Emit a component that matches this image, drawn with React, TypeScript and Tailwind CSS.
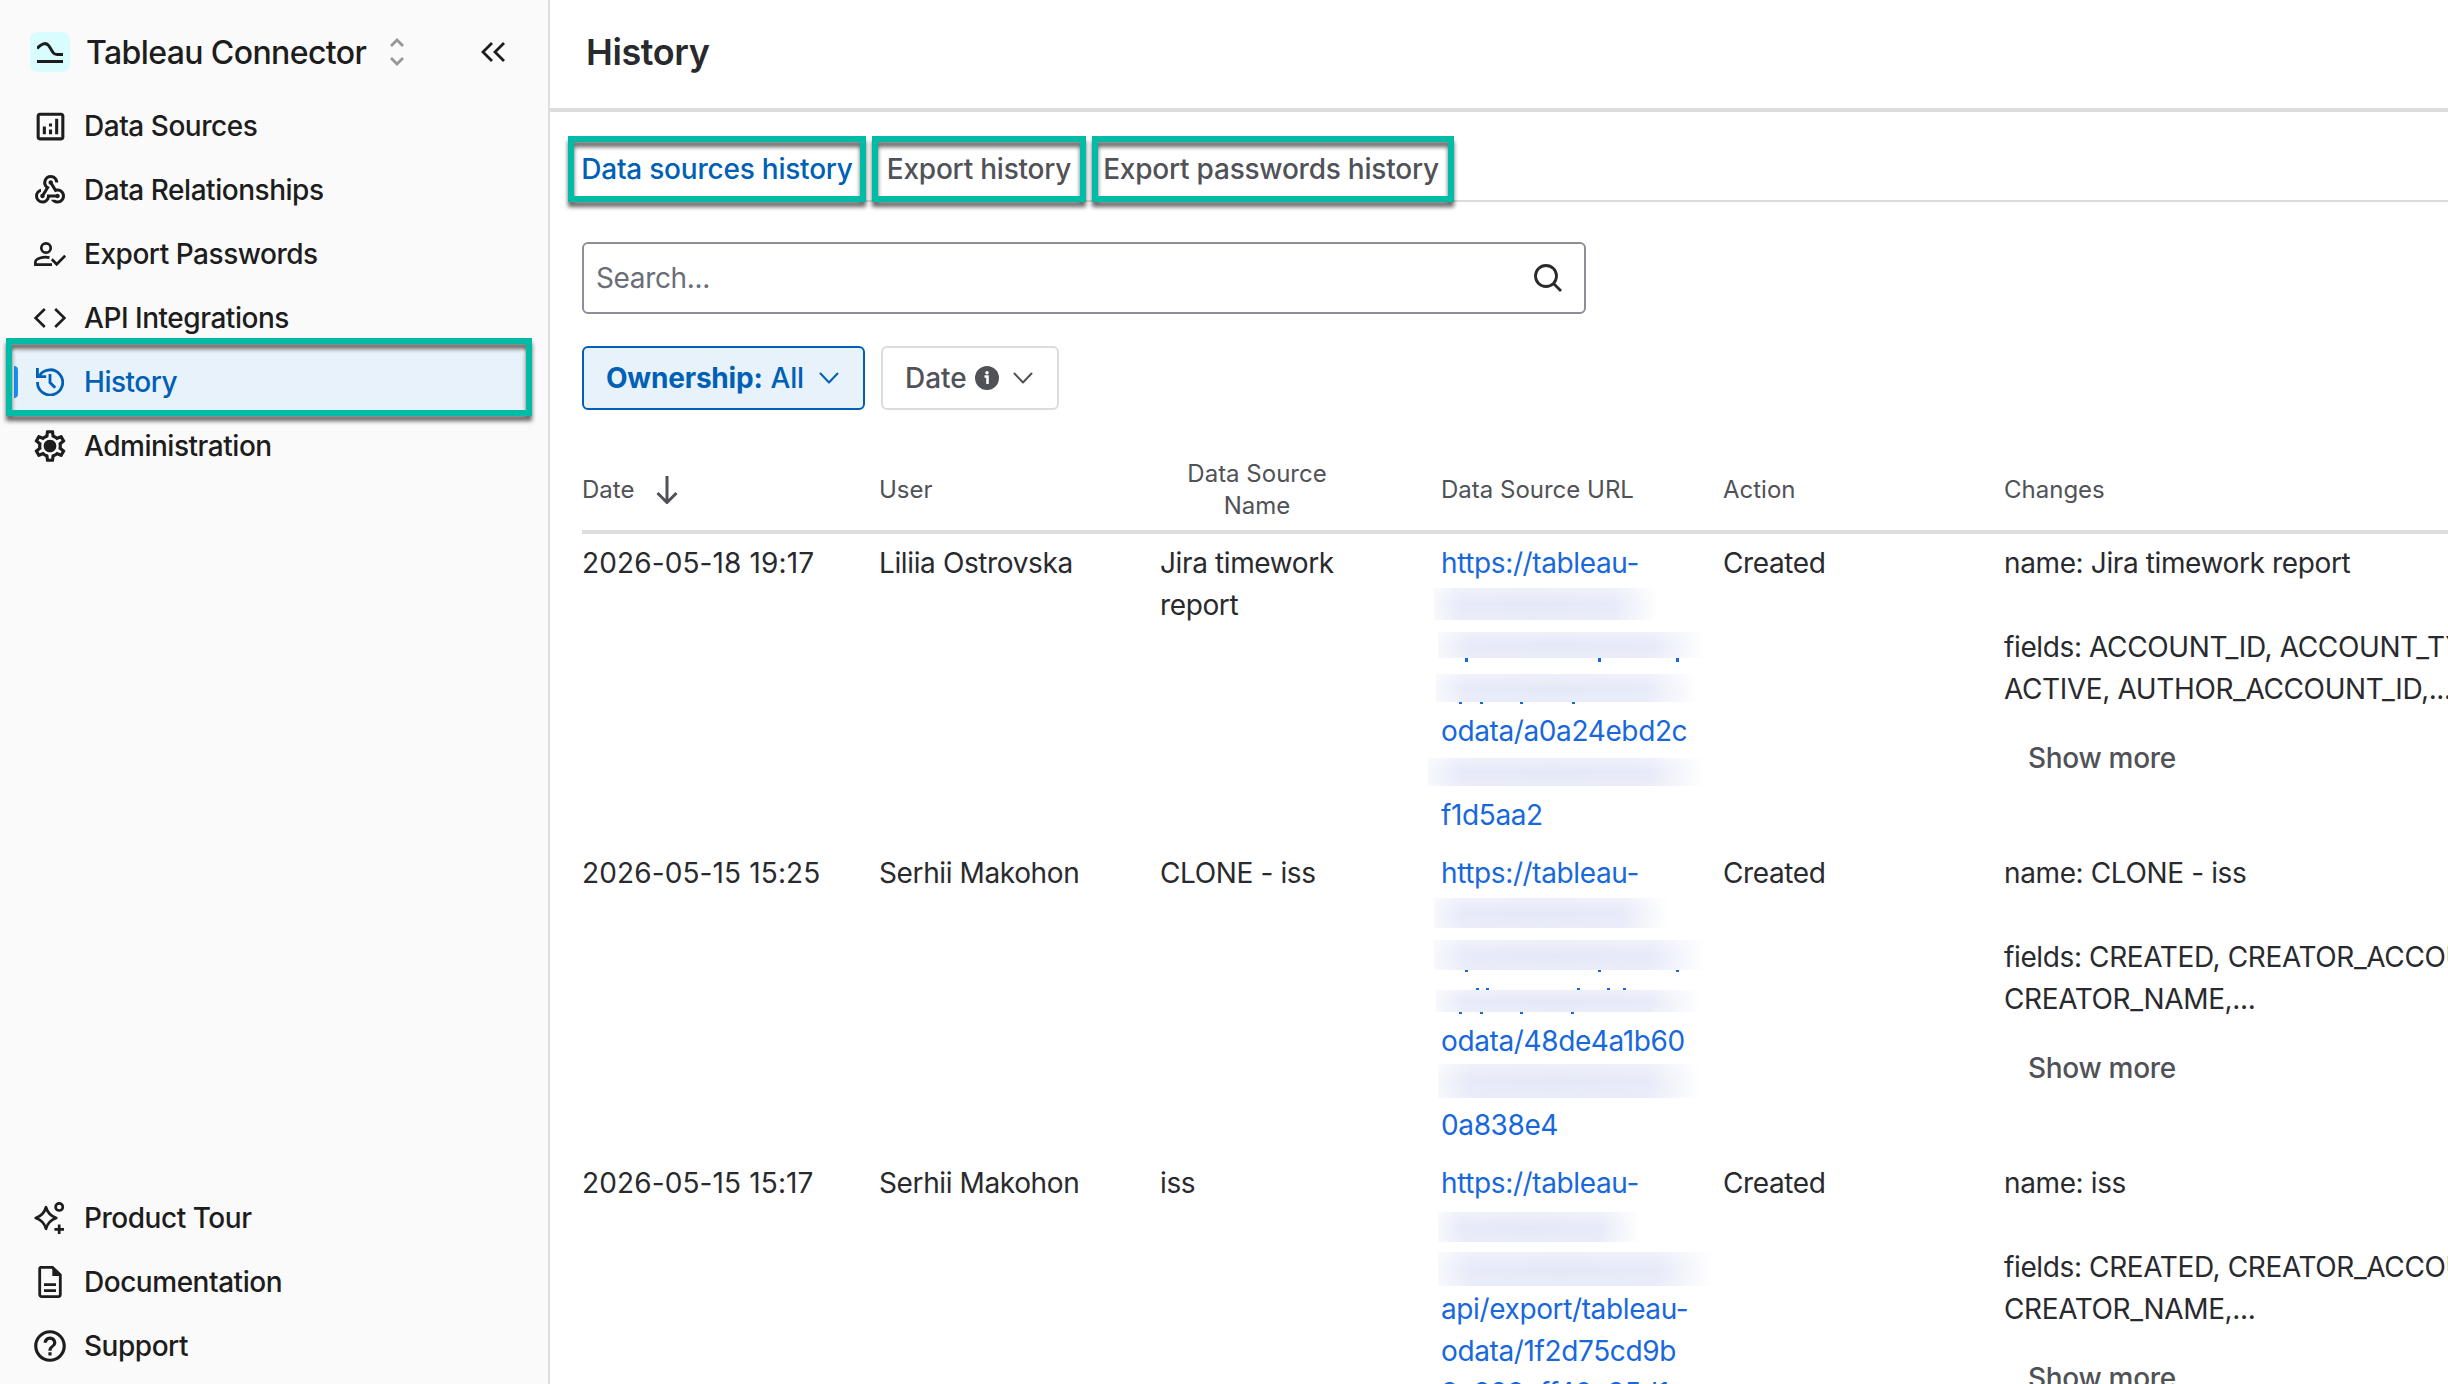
import React from "react";
import {
  MdOutlineAnalytics,
  MdWebhook,
  MdOutlineSettings,
  MdHelpOutline,
} from "react-icons/md";

type NavItem = {
  label: string;
  icon: React.ReactNode;
  active?: boolean;
};

// redacted part of a url, placed relative to the link cell
type Bar = { left: number; top: number; width: number; height: number };
type Tick = { left: number; top: number; height: number };

type HistoryRow = {
  date: string;
  user: string;
  name: string;
  url: string[];
  bars: Bar[];
  ticks: Tick[];
  action: string;
  changes: string[];
};

const ICON = "h-8 w-8 shrink-0";

const CodeIcon = () => (
  <svg viewBox="0 0 32 32" className={ICON} fill="none" stroke="currentColor" strokeWidth="2.6">
    <path d="M10.8 7 1.6 16l9.2 9M21.2 7l9.2 9-9.2 9" />
  </svg>
);

const PersonCheckIcon = () => (
  <svg viewBox="0 0 32 32" className={ICON} fill="none" stroke="currentColor" strokeWidth="2.7">
    <circle cx="12" cy="10" r="4.7" />
    <path d="M15.5 19.6C9 18 1.4 20.8 1.4 24.2v2.5H18" />
    <path d="m17.8 21.3 4.9 5 8.5-8.6" />
  </svg>
);

const HistoryIcon = () => (
  <svg viewBox="0 0 28 28" className="h-7 w-7 shrink-0" fill="none" stroke="currentColor" strokeWidth="2.8">
    <path d="M1.5 14A12.6 12.6 0 1 0 3.6 7.400" />
    <path d="M1.400 0v8.600h8.800" />
    <path d="M14 6v8.600l5.200 5.200" />
  </svg>
);

const GearIcon = () => (
  <span className="relative flex items-center justify-center">
    <MdOutlineSettings className="h-[38px] w-[38px]" />
    <span className="absolute h-3 w-3 rounded-full bg-current" />
  </span>
);

const TourIcon = () => (
  <svg viewBox="0 0 32 32" className={ICON} fill="none" stroke="currentColor" strokeWidth="2.7" strokeLinejoin="round">
    <path d="M12 5.2c1.6 6 4.4 8.9 10.3 10.8-5.9 1.9-8.7 4.8-10.3 10.8-1.600-6-4.400-8.900-10.300-10.800C7.600 14.100 10.400 11.200 12 5.200Z" />
    <circle cx="25.2" cy="4.9" r="3.6" />
    <path d="M25.2 22.500v9.500M20.400 27.300h9.600" />
  </svg>
);

const DocIcon = () => (
  <svg viewBox="0 0 32 32" className={ICON} fill="none" stroke="currentColor" strokeWidth="2.8">
    <path d="M6.500 1.400h12l7.800 7.400v19.800a2 2 0 0 1-2 2H7.700a2 2 0 0 1-2-2V3.200a1.800 1.800 0 0 1 .8-1.800Z" />
    <path d="M18.300 1v9h8.500Z" fill="currentColor" stroke="none" />
    <path d="M10 18.700h12M10 24.700h12" />
  </svg>
);

const Chevron = ({ className }: { className?: string }) => (
  <svg viewBox="0 0 20 12" className={"h-3 w-5 " + (className ?? "")} fill="none" stroke="currentColor" strokeWidth="2" strokeLinecap="round" strokeLinejoin="round">
    <path d="m1.500 1.500 8.500 9 8.500-9" />
  </svg>
);

const mainNav: NavItem[] = [
  { label: "Data Sources", icon: <MdOutlineAnalytics className="h-[37px] w-[37px]" /> },
  { label: "Data Relationships", icon: <MdWebhook className="h-9 w-9" /> },
  { label: "Export Passwords", icon: <PersonCheckIcon /> },
  { label: "API Integrations", icon: <CodeIcon /> },
  { label: "History", icon: <HistoryIcon />, active: true },
  { label: "Administration", icon: <GearIcon /> },
];

const footerNav: NavItem[] = [
  { label: "Product Tour", icon: <TourIcon /> },
  { label: "Documentation", icon: <DocIcon /> },
  { label: "Support", icon: <MdHelpOutline className="h-[38px] w-[38px]" /> },
];

const rows: HistoryRow[] = [
  {
    date: "2026-05-18 19:17",
    user: "Liliia Ostrovska",
    name: "Jira timework report",
    url: ["https://tableau-", "", "", "", "odata/a0a24ebd2c", "", "f1d5aa2"],
    bars: [
      { left: -7, top: 46, width: 224, height: 32 },
      { left: -3, top: 90, width: 268, height: 26 },
      { left: -5, top: 132, width: 262, height: 28 },
      { left: -13, top: 216, width: 276, height: 28 },
    ],
    ticks: [
      { left: 24, top: 116, height: 4 },
      { left: 157, top: 116, height: 4 },
      { left: 235, top: 116, height: 4 },
      { left: 18, top: 160, height: 2 },
      { left: 39, top: 160, height: 2 },
      { left: 79, top: 160, height: 2 },
      { left: 131, top: 160, height: 2 },
    ],
    action: "Created",
    changes: ["name: Jira timework report", "", "fields: ACCOUNT_ID, ACCOUNT_TYPE,", "ACTIVE, AUTHOR_ACCOUNT_ID,..."],
  },
  {
    date: "2026-05-15 15:25",
    user: "Serhii Makohon",
    name: "CLONE - iss",
    url: ["https://tableau-", "", "", "", "odata/48de4a1b60", "", "0a838e4"],
    bars: [
      { left: -7, top: 46, width: 234, height: 30 },
      { left: -7, top: 88, width: 272, height: 30 },
      { left: -5, top: 138, width: 264, height: 22 },
      { left: -3, top: 212, width: 262, height: 34 },
    ],
    ticks: [
      { left: 24, top: 118, height: 2 },
      { left: 157, top: 118, height: 2 },
      { left: 235, top: 118, height: 2 },
      { left: 35, top: 136, height: 2 },
      { left: 45, top: 136, height: 2 },
      { left: 136, top: 136, height: 2 },
      { left: 166, top: 136, height: 2 },
      { left: 182, top: 136, height: 2 },
      { left: 18, top: 160, height: 2 },
      { left: 39, top: 160, height: 2 },
      { left: 79, top: 160, height: 2 },
      { left: 130, top: 160, height: 2 },
    ],
    action: "Created",
    changes: ["name: CLONE - iss", "", "fields: CREATED, CREATOR_ACCOUNT_ID,", "CREATOR_NAME,..."],
  },
  {
    date: "2026-05-15 15:17",
    user: "Serhii Makohon",
    name: "iss",
    url: ["https://tableau-", "", "", "api/export/tableau-", "odata/1f2d75cd9b", "9a828eff40a35d1"],
    bars: [
      { left: -3, top: 50, width: 202, height: 30 },
      { left: -3, top: 90, width: 275, height: 34 },
    ],
    ticks: [],
    action: "Created",
    changes: ["name: iss", "", "fields: CREATED, CREATOR_ACCOUNT_ID,", "CREATOR_NAME,..."],
  },
];

const GRID = "grid grid-cols-[297px_281px_281px_282px_281px_1fr]";

const Highlight = ({ className }: { className: string }) => (
  <span
    className={
      "pointer-events-none absolute border-[6px] border-[#00bba5] drop-shadow-[0_5px_2px_rgba(0,0,0,0.6)] " + className
    }
  />
);

const NavRow = ({ item }: { item: NavItem }) => (
  <a
    className={
      item.active
        ? "relative ml-3.5 flex h-16 w-[510px] items-center rounded-lg bg-[#e8f2fb] text-[#0060b5]"
        : "ml-3.5 flex h-16 items-center text-[#1d1d1d]"
    }
  >
    {item.active && <span className="absolute left-0 h-8 w-1 rounded-r bg-[#1b90f5]" />}
    <span className="ml-4 flex w-10 items-center justify-center">{item.icon}</span>
    <span className="ml-3.5 text-[28px] font-medium tracking-[-0.47px]">{item.label}</span>
    {item.active && <Highlight className="-left-2 -top-3 h-[78px] w-[526px]" />}
  </a>
);

const Tab = ({ label, className, active }: { label: string; className: string; active?: boolean }) => (
  <button
    className={
      "relative flex h-[66px] items-center justify-center whitespace-nowrap text-[28px] font-medium tracking-[-0.22px] " +
      className
    }
  >
    <span className={active ? "text-[#0060b5]" : "text-[#505258]"}>{label}</span>
    <Highlight className="inset-0" />
  </button>
);

export default function App() {
  return (
    <div className="flex h-[1384px] w-[2448px] overflow-hidden bg-white font-[Inter,sans-serif]">
      {/* Sidebar */}
      <aside className="flex w-[550px] shrink-0 flex-col border-r-2 border-[#dedede] bg-[#fafafa]">
        <div className="flex h-[94px] items-center pl-[30px] pt-2.5">
          <div className="flex h-10 w-10 items-center justify-center rounded-lg bg-[#d9fcff]">
            <svg viewBox="0 0 26 22" className="h-[22px] w-[26px]" fill="none" stroke="#1d1d1d" strokeWidth="3">
              <path d="M0 7.500C4 3 9 .5 12 5l4 6.500c1 1.500 2 2 4 2h6M0 20.500h26" />
            </svg>
          </div>
          <span className="ml-4 mt-0.5 text-[32px] font-medium tracking-[-0.6px] text-[#1d1d1d]">Tableau Connector</span>
          <svg viewBox="0 0 14 28" className="ml-6 h-7 w-3.5" fill="none" stroke="#969696" strokeWidth="2.8">
            <path d="m1 8 6-6 6 6M1 20l6 6 6-6" />
          </svg>
          <svg viewBox="0 0 24 20" className="ml-[77px] h-5 w-6" fill="none" stroke="#1d1d1d" strokeWidth="2.8">
            <path d="m11 1-9 9 9 9M23 1l-9 9 9 9" />
          </svg>
        </div>
        <nav>
          {mainNav.map((item) => (
            <NavRow key={item.label} item={item} />
          ))}
        </nav>
        <nav className="mt-auto pb-1.5">
          {footerNav.map((item) => (
            <NavRow key={item.label} item={item} />
          ))}
        </nav>
      </aside>

      {/* Page */}
      <main className="min-w-0 flex-1">
        <header className="flex h-28 items-center border-b-4 border-[#dddddd] pl-9 pb-1">
          <h1 className="text-[36px] font-semibold tracking-[-0.4px] text-[#292a2e]">History</h1>
        </header>

        <div className="pt-6">
          <div className="ml-8 border-b-2 border-[#dcdcdc]">
            <div className="-mb-0.5 -ml-3.5 flex gap-1.5">
              <Tab label="Data sources history" className="w-[298px]" active />
              <Tab label="Export history" className="w-[214px]" />
              <Tab label="Export passwords history" className="w-[362px] pr-1" />
            </div>
          </div>
        </div>

        <div className="ml-8 pt-10">
          <div className="flex h-[72px] w-[1004px] items-center justify-between rounded-md border-2 border-[#8c8f97] pl-3 pr-[22px]">
            <span className="text-[28px] tracking-[-0.35px] text-[#6b6e76]">Search...</span>
            <svg viewBox="0 0 28 28" className="h-7 w-7" fill="none" stroke="#292a2e" strokeWidth="2.800">
              <circle cx="12" cy="12" r="10.500" />
              <path d="m19.500 19.500 7.500 7.500" />
            </svg>
          </div>

          <div className="mt-8 flex gap-4">
            <button className="flex h-16 w-[283px] items-center rounded-md border-2 border-[#0060b5] bg-[#e8f2fb] pl-[22px] text-[28px] tracking-[-0.2px] text-[#0060b5]">
              <b className="font-bold">Ownership:</b>
              <span className="ml-2 font-medium">All</span>
              <Chevron className="ml-[15px]" />
            </button>
            <button className="flex h-16 w-[178px] items-center rounded-md border-2 border-[#dcdcde] pl-[22px] text-[28px] font-medium text-[#505258]">
              Date
              <svg viewBox="0 0 24 24" className="ml-2 h-6 w-6">
                <circle cx="12" cy="12" r="12" fill="#505258" />
                <circle cx="12" cy="6.800" r="1.700" fill="#fff" />
                <path d="M9.500 10.500h3V18" fill="none" stroke="#fff" strokeWidth="2.600" />
              </svg>
              <Chevron className="ml-3.5" />
            </button>
          </div>

          {/* Table */}
          <div className={GRID + " mt-10 h-[84px] items-center border-b-4 border-[#dddddd] text-2xl leading-8 text-[#505258]"}>
            <div className="flex items-center gap-[22px]">
              Date
              <svg viewBox="0 0 22 28" className="h-7 w-[22px]" fill="none" stroke="currentColor" strokeWidth="3">
                <path d="M11 0v26M1.500 17l9.500 9.500 9.500-9.500" />
              </svg>
            </div>
            <div>User</div>
            <div className="w-[194px] text-center">Data Source Name</div>
            <div>Data Source URL</div>
            <div>Action</div>
            <div>Changes</div>
          </div>
          {rows.map((row) => (
            <div key={row.date} className={GRID + " h-[310px] py-2 text-[28px] leading-[42px] tracking-[-0.38px] text-[#292a2e]"}>
              <div className="tracking-[0.12px]">{row.date}</div>
              <div>{row.user}</div>
              <div className="w-[200px]">{row.name}</div>
              <div className="relative text-[#1868db]">
                {row.url.map((line, i) => (
                  <div key={i} className="h-[42px]">{line}</div>
                ))}
                {row.bars.map((bar, i) => (
                  <span
                    key={i}
                    className="absolute bg-[linear-gradient(to_right,#f6f8fd,#e7eaf8_12%,#e5e9f7_45%,#e7eaf8_80%,#ffffff)]"
                    style={bar}
                  >
                    <span className="block h-full bg-[linear-gradient(to_bottom,rgba(255,255,255,0.35),transparent_50%,rgba(255,255,255,0.15))]" />
                  </span>
                ))}
                {row.ticks.map((tick, i) => (
                  <span key={i} className="absolute w-[3px] bg-[#1868db]" style={tick} />
                ))}
              </div>
              <div>{row.action}</div>
              <div className="whitespace-nowrap">
                {row.changes.map((line, i) => (
                  <div key={i} className="h-[42px]">{line}</div>
                ))}
                <button className="mt-4 h-16 px-6 font-medium tracking-[-0.3px] text-[#505258]">Show more</button>
              </div>
            </div>
          ))}
        </div>
      </main>
    </div>
  );
}
